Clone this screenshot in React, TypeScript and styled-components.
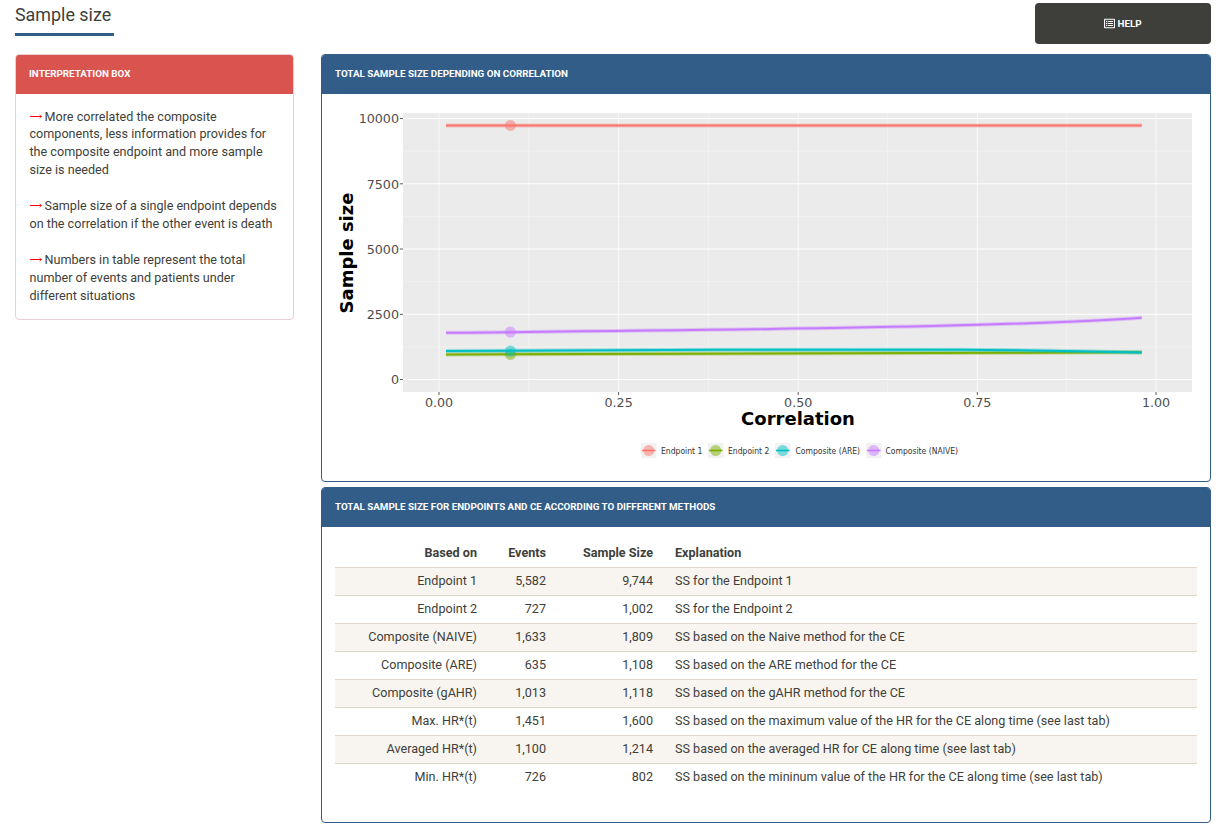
import { FaRegListAlt } from 'react-icons/fa';
import styled, { createGlobalStyle } from 'styled-components';

const BLUE = '#325d88';
const INK = '#3e3f3a';

const GlobalStyle = createGlobalStyle`
  html, body {
    margin: 0;
    padding: 0;
    background: #fff;
    color: ${INK};
    font-family: Roboto, "Liberation Sans", sans-serif;
    font-size: 12.6px;
    line-height: 18px;
  }
  * { box-sizing: border-box; }
`;

const Page = styled.div`
  width: 1224px;
  height: 826px;
  padding: 3px 13px 0 15px;
  overflow: hidden;
`;

const TitleRow = styled.header`
  display: flex;
  justify-content: space-between;
  align-items: flex-start;
  height: 51px;
`;

const Title = styled.h2`
  margin: 0;
  width: 99px;
  height: 33px;
  padding-top: 1px;
  border-bottom: 3px solid ${BLUE};
  font-size: 17.9px;
  font-weight: 400;
  line-height: 22px;
  white-space: nowrap;
`;

const HelpButton = styled.button`
  width: 176px;
  height: 41px;
  display: flex;
  align-items: center;
  justify-content: center;
  gap: 2px;
  border: 0;
  border-radius: 4px;
  background: ${INK};
  color: #fff;
  font-family: inherit;
  font-size: 9.8px;
  font-weight: 700;
`;

const Columns = styled.div`
  display: grid;
  grid-template-columns: 279px 890px;
  column-gap: 27px;
  align-items: start;
`;

const Stack = styled.div`
  display: flex;
  flex-direction: column;
  gap: 5px;
`;

const Card = styled.section<{ $tone: string; $edge: string; $height: number }>`
  height: ${p => p.$height}px;
  border: 1px solid ${p => p.$edge};
  border-radius: 4px;
  background: #fff;
  overflow: hidden;
  & > h3 { background: ${p => p.$tone}; }
`;

const CardHeading = styled.h3`
  margin: 0;
  height: 38.5px;
  padding: 0 13px;
  display: flex;
  align-items: center;
  color: #fff;
  font-size: 9.8px;
  font-weight: 700;
  text-transform: uppercase;
  white-space: nowrap;
`;

const Notes = styled.div`
  padding: 14px 13px 0 13.5px;
`;

const Note = styled.p`
  margin: 0 0 17.9px;
  line-height: 17.9px;
`;

const ArrowMark = styled.svg`
  display: inline-block;
  width: 12px;
  height: 7px;
  margin-right: 3px;
  vertical-align: 1px;
`;

const ChartBox = styled.div`
  padding: 14.5px 13px 0 13px;
`;

const Chart = styled.svg`
  display: block;
`;

const TableBox = styled.div`
  padding: 13px 13px 0 13px;
`;

const Table = styled.table`
  width: 862px;
  table-layout: fixed;
  border-collapse: collapse;
`;

const HeadCell = styled.th<{ $left?: boolean; $width?: number }>`
  height: 28px;
  padding: 0 11px;
  width: ${p => (p.$width ? `${p.$width}px` : 'auto')};
  text-align: ${p => (p.$left ? 'left' : 'right')};
  font-weight: 700;
`;

const Row = styled.tr<{ $odd: boolean }>`
  background: ${p => (p.$odd ? '#f8f5f0' : '#fff')};
  border-top: 1px solid #dfd7ca;
`;

const Cell = styled.td<{ $left?: boolean }>`
  height: 28px;
  padding: 0 11px 1px;
  text-align: ${p => (p.$left ? 'left' : 'right')};
  white-space: nowrap;
`;

const TICK = '#4d4d4d';
const xMajor = [439, 618.6, 798.2, 977.3, 1156];
const xLabels = ['0.00', '0.25', '0.50', '0.75', '1.00'];
const xMinor = [528.8, 708.4, 887.7, 1066.6];
const yMajor = [118.5, 183.8, 249, 314.3, 379.5];
const yLabels = ['10000', '7500', '5000', '2500', '0'];
const yMinor = [151.1, 216.4, 281.7, 346.9];

const SERIES = [
  { name: 'Endpoint 1', color: '#F8766D', d: 'M446 125.4H1141.7', y: 125.4, key: 641, text: 661 },
  { name: 'Endpoint 2', color: '#7CAE00', d: 'M446 354.4C650 353.8 900 353.4 1141.7 352.3', y: 354.4, key: 708, text: 728 },
  { name: 'Composite (ARE)', color: '#00BFC4', d: 'M446 351C600 350 800 349.2 960 349.8C1040 350.3 1100 351.6 1141.7 352.6', y: 351, key: 775, text: 795.5 },
  { name: 'Composite (NAIVE)', color: '#C77CFF', d: 'M446 332.8C620 331 800 329.5 950 325.6C1040 323.2 1100 321 1141.7 317.8', y: 332, key: 866, text: 885.5 },
];

const ROWS = [
  ['Endpoint 1', '5,582', '9,744', 'SS for the Endpoint 1'],
  ['Endpoint 2', '727', '1,002', 'SS for the Endpoint 2'],
  ['Composite (NAIVE)', '1,633', '1,809', 'SS based on the Naive method for the CE'],
  ['Composite (ARE)', '635', '1,108', 'SS based on the ARE method for the CE'],
  ['Composite (gAHR)', '1,013', '1,118', 'SS based on the gAHR method for the CE'],
  ['Max. HR*(t)', '1,451', '1,600', 'SS based on the maximum value of the HR for the CE along time (see last tab)'],
  ['Averaged HR*(t)', '1,100', '1,214', 'SS based on the averaged HR for CE along time (see last tab)'],
  ['Min. HR*(t)', '726', '802', 'SS based on the mininum value of the HR for the CE along time (see last tab)'],
];

function RedArrow() {
  return (
    <ArrowMark viewBox="0 0 12 7" fill="none" stroke="#f00">
      <path d="M0 3.5H11.5" strokeWidth={1.2} />
      <path d="M9.5 1.8L11.6 3.5L9.5 5.2" strokeWidth={0.7} />
    </ArrowMark>
  );
}

function SamplePlot() {
  return (
    <Chart width={862} height={358} viewBox="335 108 862 358" fontFamily="'DejaVu Sans', sans-serif">
      <rect x={403} y={113} width={789} height={279} fill="#ebebeb" />
      {yMinor.map(y => <line key={y} x1={403} x2={1192} y1={y} y2={y} stroke="#f5f5f5" strokeWidth={0.7} />)}
      {xMinor.map(x => <line key={x} x1={x} x2={x} y1={113} y2={392} stroke="#f5f5f5" strokeWidth={0.7} />)}
      {yMajor.map(y => <line key={y} x1={403} x2={1192} y1={y} y2={y} stroke="#fff" strokeWidth={1.1} />)}
      {xMajor.map(x => <line key={x} x1={x} x2={x} y1={113} y2={392} stroke="#fff" strokeWidth={1.1} opacity={0.7} />)}

      {SERIES.map(s => (
        <g key={s.name} fill="none" stroke={s.color}>
          <path d={s.d} strokeWidth={4} opacity={0.35} />
          <path d={s.d} strokeWidth={2} />
          <circle cx={510.4} cy={s.y} r={5.5} fill={s.color} stroke="none" opacity={0.5} />
        </g>
      ))}

      {yMajor.map((y, i) => (
        <g key={y}>
          <line x1={400} x2={403} y1={y} y2={y} stroke="#333" strokeWidth={0.8} />
          <text x={399} y={y + 4.8} textAnchor="end" fontSize={12.7} fill={TICK}>{yLabels[i]}</text>
        </g>
      ))}
      {xMajor.map((x, i) => (
        <g key={x}>
          <line x1={x} x2={x} y1={392} y2={395} stroke="#333" strokeWidth={0.8} />
          <text x={x} y={407} textAnchor="middle" fontSize={12.7} fill={TICK}>{xLabels[i]}</text>
        </g>
      ))}

      <text x={798} y={425} textAnchor="middle" fontSize={18} fontWeight={700} fill="#000">Correlation</text>
      <text transform="translate(353 253) rotate(-90)" textAnchor="middle" fontSize={18} fontWeight={700} fill="#000">Sample size</text>

      {SERIES.map(s => (
        <g key={s.name}>
          <rect x={s.key} y={443} width={15.5} height={15} fill="#f2f2f2" />
          <circle cx={s.key + 7.7} cy={450.5} r={5.5} fill={s.color} opacity={0.5} />
          <line x1={s.key + 1} x2={s.key + 14.5} y1={450.5} y2={450.5} stroke={s.color} strokeWidth={1.6} />
          <text x={s.text} y={453.6} fontSize={8.5} fontFamily="'DejaVu Sans Condensed', 'DejaVu Sans', sans-serif" fill="#333">{s.name}</text>
        </g>
      ))}
    </Chart>
  );
}

export default function App() {
  return (
    <>
      <GlobalStyle />
      <Page>
        <TitleRow>
          <Title>Sample size</Title>
          <HelpButton><FaRegListAlt size={11} /> HELP</HelpButton>
        </TitleRow>
        <Columns>
          <Card $tone="#d9534f" $edge="#e8d0d4" $height={266}>
            <CardHeading>Interpretation box</CardHeading>
            <Notes>
              <Note><RedArrow />More correlated the composite components, less information provides for the composite endpoint and more sample size is needed</Note>
              <Note><RedArrow />Sample size of a single endpoint depends on the correlation if the other event is death</Note>
              <Note><RedArrow />Numbers in table represent the total number of events and patients under different situations</Note>
            </Notes>
          </Card>
          <Stack>
            <Card $tone={BLUE} $edge={BLUE} $height={428}>
              <CardHeading>Total sample size depending on correlation</CardHeading>
              <ChartBox><SamplePlot /></ChartBox>
            </Card>
            <Card $tone={BLUE} $edge={BLUE} $height={336}>
              <CardHeading>Total sample size for endpoints and CE according to different methods</CardHeading>
              <TableBox>
                <Table>
                  <thead>
                    <tr>
                      <HeadCell $width={153}>Based on</HeadCell>
                      <HeadCell $width={69}>Events</HeadCell>
                      <HeadCell $width={107}>Sample Size</HeadCell>
                      <HeadCell $left>Explanation</HeadCell>
                    </tr>
                  </thead>
                  <tbody>
                    {ROWS.map((r, i) => (
                      <Row key={r[0]} $odd={i % 2 === 0}>
                        <Cell>{r[0]}</Cell>
                        <Cell>{r[1]}</Cell>
                        <Cell>{r[2]}</Cell>
                        <Cell $left>{r[3]}</Cell>
                      </Row>
                    ))}
                  </tbody>
                </Table>
              </TableBox>
            </Card>
          </Stack>
        </Columns>
      </Page>
    </>
  );
}
